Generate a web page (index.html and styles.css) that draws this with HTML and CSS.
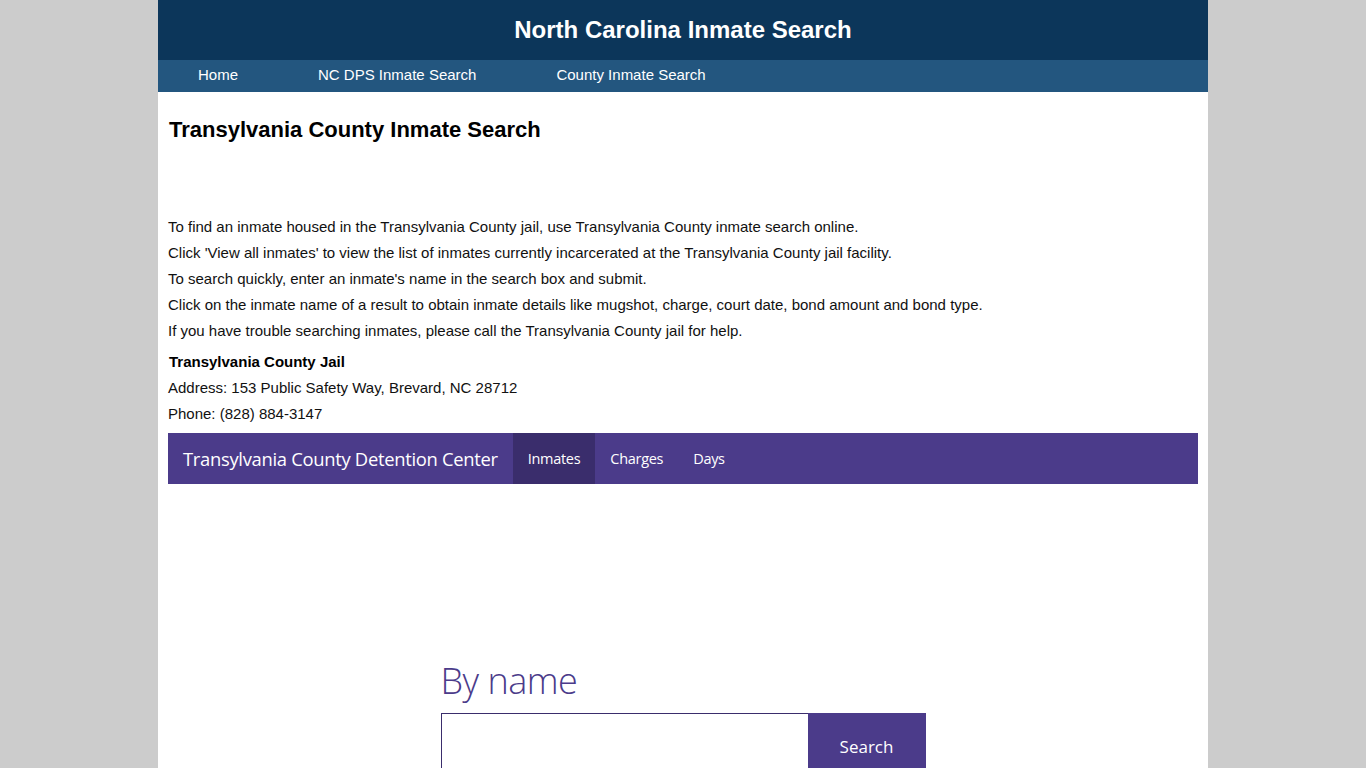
FILE: index.html
```html
<!DOCTYPE html>
<html lang="en">
<head>
<meta charset="utf-8">
<title>Transylvania County Inmate Search</title>
<link rel="stylesheet" href="styles.css">
</head>
<body>
<div class="page">
  <header class="site-header">
    <div class="site-title">North Carolina Inmate Search</div>
    <nav class="site-nav">
      <a href="#">Home</a>
      <a href="#">NC DPS Inmate Search</a>
      <a href="#">County Inmate Search</a>
    </nav>
  </header>

  <main class="content">
    <h1 class="page-title">Transylvania County Inmate Search</h1>

    <div class="intro">
      <p>To find an inmate housed in the Transylvania County jail, use Transylvania County inmate search online.</p>
      <p>Click 'View all inmates' to view the list of inmates currently incarcerated at the Transylvania County jail facility.</p>
      <p>To search quickly, enter an inmate's name in the search box and submit.</p>
      <p>Click on the inmate name of a result to obtain inmate details like mugshot, charge, court date, bond amount and bond type.</p>
      <p>If you have trouble searching inmates, please call the Transylvania County jail for help.</p>
    </div>

    <div class="jail-info">
      <p class="jail-name">Transylvania County Jail</p>
      <p>Address: 153 Public Safety Way, Brevard, NC 28712</p>
      <p>Phone: (828) 884-3147</p>
    </div>

    <div class="roster">
      <nav class="roster-nav">
        <span class="roster-brand">Transylvania County Detention Center</span>
        <a href="#" class="active">Inmates</a>
        <a href="#">Charges</a>
        <a href="#">Days</a>
      </nav>

      <section class="search-block">
        <h2 class="search-title">By name</h2>
        <form class="search-form">
          <input type="text" class="search-input" aria-label="Name">
          <button type="button" class="search-button">Search</button>
        </form>
      </section>
    </div>
  </main>
</div>
</body>
</html>
```

FILE: styles.css
```css
html, body {
  margin: 0;
  padding: 0;
}

body {
  background: #cccccc;
  font-family: "Liberation Sans", Arial, sans-serif;
  color: #111;
}

.page {
  width: 1050px;
  margin: 0 auto;
  background: #ffffff;
  min-height: 768px;
}

/* top banner */
.site-header {
  display: flex;
  flex-direction: column;
}

.site-title {
  height: 60px;
  background: #0c365a;
  color: #fff;
  font-size: 24px;
  font-weight: bold;
  display: flex;
  align-items: center;
  justify-content: center;
}

.site-nav {
  height: 32px;
  background: #23567f;
  display: flex;
  align-items: center;
  padding-left: 40px;
  padding-bottom: 3px;
  box-sizing: border-box;
  gap: 80px;
}

.site-nav a {
  color: #fff;
  text-decoration: none;
  font-size: 15px;
}

/* body copy */
.content {
  padding: 0 10px;
}

.page-title {
  margin: 0;
  padding: 25px 1px 0;
  font-size: 22px;
  font-weight: bold;
  color: #000;
  line-height: 25px;
}

.intro {
  margin-top: 72px;
}

.intro p,
.jail-info p {
  margin: 0;
  font-size: 15px;
  line-height: 26px;
  color: #111;
}

.jail-info {
  margin-top: 5px;
}

.jail-info .jail-name {
  font-weight: bold;
  color: #000;
  padding-left: 1px;
}

/* roster widget */
.roster {
  margin-top: 6px;
}

.roster-nav {
  height: 51px;
  background: #4b3b8a;
  display: flex;
  align-items: stretch;
  font-family: "Open Sans", "Noto Sans", sans-serif;
}

.roster-brand {
  color: #fff;
  font-size: 18.4px;
  display: flex;
  align-items: center;
  padding: 0 15px;
  letter-spacing: -0.3px;
}

.roster-nav a {
  color: #fff;
  text-decoration: none;
  font-size: 14.5px;
  display: flex;
  align-items: center;
  padding: 0 15px;
  letter-spacing: -0.3px;
}

.roster-nav a.active {
  background: #3a2d6c;
}

.search-block {
  width: 485px;
  margin: 0 auto;
  padding-top: 173px;
}

.search-title {
  margin: 0 0 8px;
  font-family: "Open Sans", "Noto Sans", sans-serif;
  font-weight: 300;
  font-size: 36px;
  line-height: 48px;
  color: #4b3b8a;
  letter-spacing: -0.5px;
}

.search-form {
  display: flex;
  height: 67px;
}

.search-input {
  flex: 1;
  border: 1px solid #3a2d6c;
  border-right: none;
  margin: 0;
  padding: 0 10px;
  font-size: 16px;
  outline: none;
}

.search-button {
  width: 118px;
  border: none;
  margin: 0;
  background: #4b3b8a;
  color: #fff;
  font-family: "Open Sans", "Noto Sans", sans-serif;
  font-size: 17px;
  padding: 0;
}
```
